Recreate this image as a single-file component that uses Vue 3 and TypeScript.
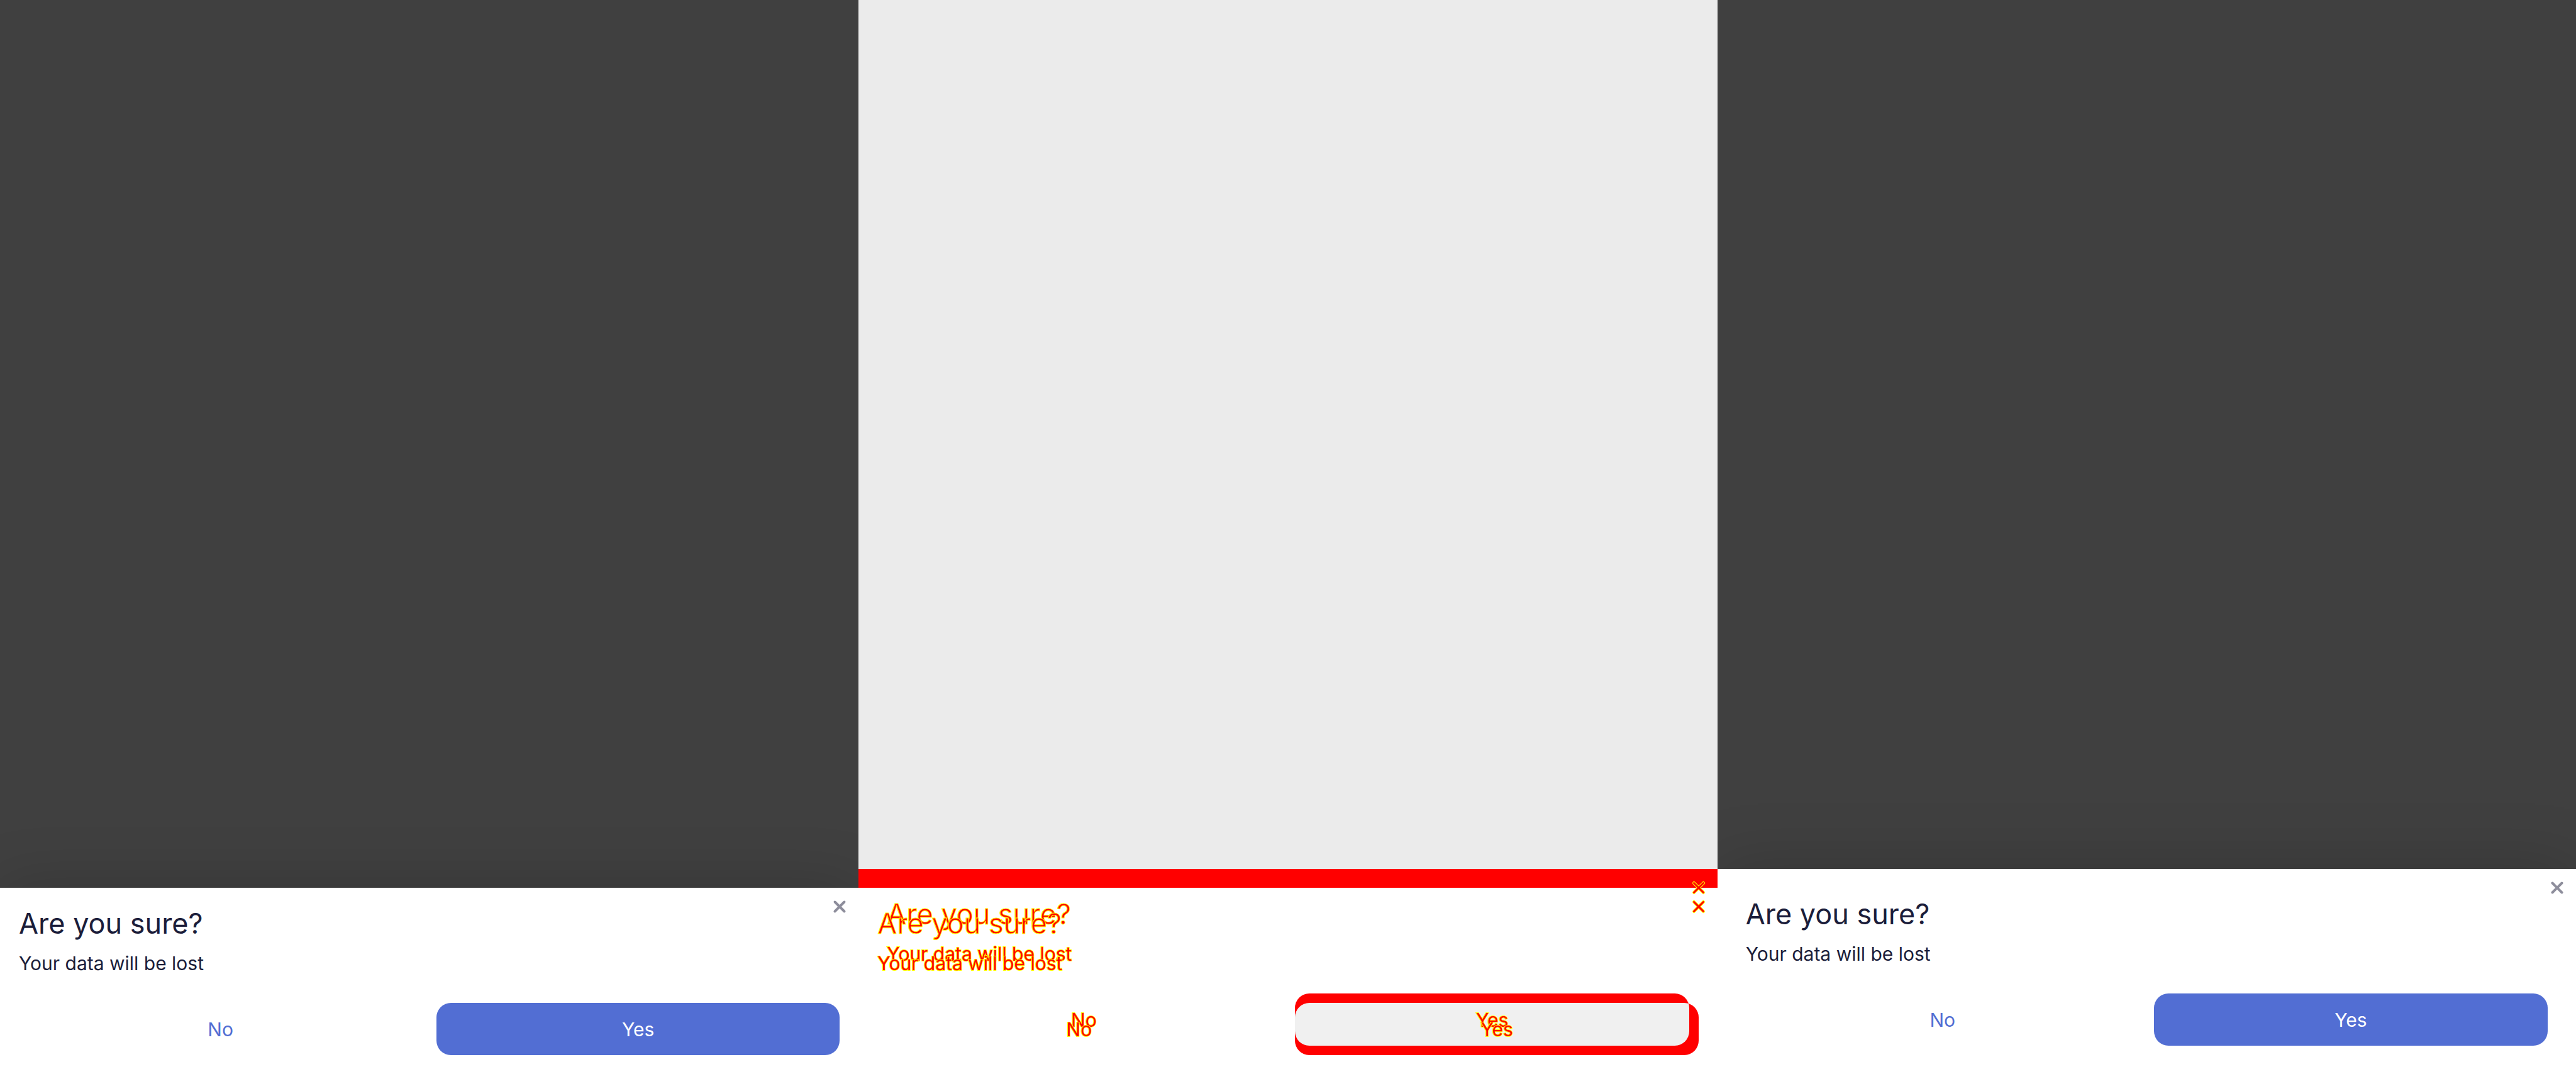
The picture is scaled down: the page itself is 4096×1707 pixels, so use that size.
<script setup lang="ts">
interface Panel {
  id: string
  kind: 'normal' | 'diff'
  sheets: Array<'compact' | 'roomy'>
}

const panels: Panel[] = [
  { id: 'before', kind: 'normal', sheets: ['compact'] },
  { id: 'difference', kind: 'diff', sheets: ['roomy', 'compact'] },
  { id: 'after', kind: 'normal', sheets: ['roomy'] },
]
</script>

<template>
  <main class="board">
    <section v-for="panel in panels" :key="panel.id" class="panel" :class="panel.kind">
      <article v-for="size in panel.sheets" :key="size" class="sheet" :class="size">
        <h2 class="title">Are you sure?</h2>
        <p class="message">Your data will be lost</p>
        <div class="actions">
          <button type="button" class="button plain"><span class="label">No</span></button>
          <button type="button" class="button filled"><span class="label">Yes</span></button>
        </div>
        <button type="button" class="close" aria-label="Close">
          <svg class="cross" viewBox="0 0 20 20" aria-hidden="true">
            <path class="cross-edge" d="M2.5 2.5 17.5 17.5M17.5 2.5 2.5 17.5" />
            <path class="cross-core" d="M2.5 2.5 17.5 17.5M17.5 2.5 2.5 17.5" />
          </svg>
        </button>
      </article>
    </section>
  </main>
</template>

<style>
body {
  margin: 0;
}
</style>

<style scoped>
.board {
  display: grid;
  grid-template-columns: repeat(3, 1fr);
  min-height: 100vh;
  font-family: Inter, "Liberation Sans", sans-serif;
  color: #1b1d3a;
}

.panel {
  display: grid;
  align-items: end;
  overflow: hidden;
  background: #404040;
}

.sheet {
  --pad: 30px;
  position: relative;
  grid-area: 1 / 1;
  padding: var(--pad);
  background: #fff;
  box-shadow: 0 0 100px rgba(0, 0, 0, 0.18);
}

.sheet.roomy {
  --pad: 45px;
}

.title,
.message {
  margin: 0;
  font-weight: 400;
}

.title {
  font-size: 45px;
  line-height: 54px;
}

.message {
  margin-top: 13px;
  font-size: 30px;
  line-height: 46px;
}

.actions {
  display: grid;
  grid-template-columns: 1fr 1fr;
  gap: 23px;
  margin-top: 40px;
}

.button {
  height: 83px;
  padding: 0;
  border: 0;
  border-radius: 23px;
  font: 400 30px/46px Inter, "Liberation Sans", sans-serif;
}

.plain {
  background: transparent;
  color: #526ed3;
}

.filled {
  background: #526ed3;
  color: #fff;
}

.close {
  position: absolute;
  top: 0;
  right: 0;
  display: grid;
  place-items: center;
  width: 60px;
  height: 60px;
  padding: 0;
  border: 0;
  background: transparent;
}

.cross {
  width: 20px;
  height: 20px;
  fill: none;
  stroke: #8e8e9c;
  stroke-width: 4;
  stroke-linecap: round;
  overflow: visible;
}

.cross-edge {
  display: none;
}

/* Comparison panel: both sheets overlaid, changed pixels in red with yellow edges */
.diff {
  background: #ebebeb;
}

.diff .sheet {
  background: transparent;
  box-shadow: none;
  color: #f00;
}

.diff .roomy {
  background: linear-gradient(#f00 30px, #fff 30px);
}

.diff .title {
  -webkit-text-stroke: 1px #ff0;
}

.diff .message,
.diff .label {
  -webkit-text-stroke: 2px #ff0;
  paint-order: stroke;
}

.diff .button {
  color: #f00;
}

.diff .filled {
  background: #f00;
}

.diff .label {
  position: relative;
  z-index: 2;
}

/* Area shared by the two filled buttons */
.diff .compact .filled {
  position: relative;
  overflow: hidden;
}

.diff .compact .filled::before {
  content: "";
  position: absolute;
  top: -15px;
  right: 15px;
  bottom: 15px;
  left: 0;
  border-radius: 23px;
  background: #f0f0f0;
}

.diff .cross {
  stroke: #f00;
  stroke-width: 3;
}

.diff .cross-edge {
  display: inline;
  stroke: #ff0;
  stroke-width: 5;
}
</style>
